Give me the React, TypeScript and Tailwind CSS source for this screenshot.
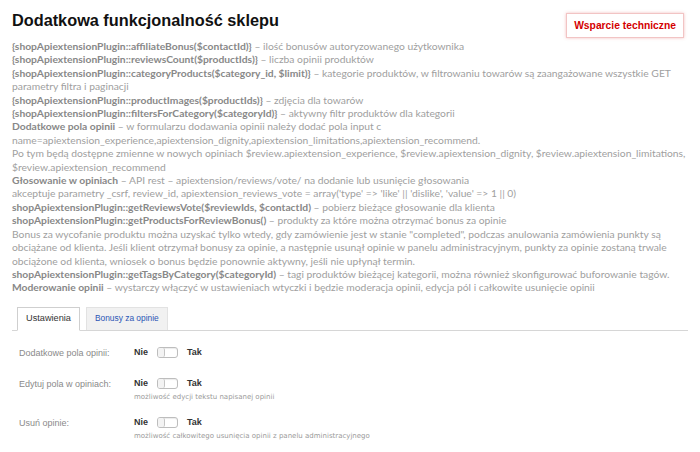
import React from 'react';

const B: React.FC<{ children: React.ReactNode }> = ({ children }) => (
  <span className="font-bold text-[#888]">{children}</span>
);

const Toggle: React.FC = () => (
  <span className="relative inline-block w-[21px] h-[11px] rounded-[3px] border border-[#bdbdbd] bg-white shadow-[inset_0_1px_1px_rgba(0,0,0,0.08)]">
    <span className="absolute left-0 top-0 h-[9px] w-[7px] rounded-[2px] border-r border-[#c4c4c4] bg-[#f3f3f3]" />
  </span>
);

const SettingRow: React.FC<{ label: string; hint?: string; className?: string }> = ({ label, hint, className }) => (
  <div className={`flex ${className ?? ''}`}>
    <div className="w-[115px] shrink-0 text-[9px] text-[#8a8a8a] leading-[12px]">{label}</div>
    <div>
      <div className="flex items-center gap-[9px] h-[12px]">
        <span className="text-[9px] font-bold text-[#333]">Nie</span>
        <Toggle />
        <span className="text-[9px] font-bold text-[#333]">Tak</span>
      </div>
      {hint && (
        <div className="mt-[3px] text-[7px] leading-[9px] text-[#9a9a9a] font-['DejaVu_Sans',sans-serif]">{hint}</div>
      )}
    </div>
  </div>
);

export default function App() {
  return (
    <div className="w-[700px] h-[452px] bg-white px-[12px] pt-[9px] font-['Liberation_Sans',Arial,sans-serif] overflow-hidden">
      <div className="flex items-start justify-between">
        <h1 className="text-[16.3px] font-bold text-[#111] leading-[22px]">Dodatkowa funkcjonalność sklepu</h1>
        <button className="mt-[4px] mr-[4px] h-[25px] px-[7px] bg-white border border-[#f2c4c4] shadow-[0_0_3px_rgba(220,80,80,0.35)] text-[10.3px] font-bold text-[#d40000]">
          Wsparcie techniczne
        </button>
      </div>

      <div className="mt-[2px] font-['Lato',sans-serif] text-[10.3px] leading-[13.4px] text-[#a0a0a0] whitespace-nowrap">
        <div><B>{'{shopApiextensionPlugin::affiliateBonus($contactId)}'}</B> – ilość bonusów autoryzowanego użytkownika</div>
        <div><B>{'{shopApiextensionPlugin::reviewsCount($productIds)}'}</B> – liczba opinii produktów</div>
        <div>
          <B>{'{shopApiextensionPlugin::categoryProducts($category_id, $limit)}'}</B> – kategorie produktów, w filtrowaniu towarów są zaangażowane wszystkie GET
          <br />
          parametry filtra i paginacji
        </div>
        <div><B>{'{shopApiextensionPlugin::productImages($productIds)}'}</B> – zdjęcia dla towarów</div>
        <div><B>{'{shopApiextensionPlugin::filtersForCategory($categoryId)}'}</B> – aktywny filtr produktów dla kategorii</div>
        <div>
          <B>Dodatkowe pola opinii</B> – w formularzu dodawania opinii należy dodać pola input c
          <br />
          name=apiextension_experience,apiextension_dignity,apiextension_limitations,apiextension_recommend.
        </div>
        <div>
          Po tym będą dostępne zmienne w nowych opiniach $review.apiextension_experience, $review.apiextension_dignity, $review.apiextension_limitations,
          <br />
          $review.apiextension_recommend
        </div>
        <div><B>Głosowanie w opiniach</B> – API rest – apiextension/reviews/vote/ na dodanie lub usunięcie głosowania</div>
        <div>akceptuje parametry _csrf, review_id, apiextension_reviews_vote = array('type' =&gt; 'like' || 'dislike', 'value' =&gt; 1 || 0)</div>
        <div><B>shopApiextensionPlugin::getReviewsVote($reviewIds, $contactId)</B> – pobierz bieżące głosowanie dla klienta</div>
        <div><B>shopApiextensionPlugin::getProductsForReviewBonus()</B> – produkty za które można otrzymać bonus za opinie</div>
        <div>
          Bonus za wycofanie produktu można uzyskać tylko wtedy, gdy zamówienie jest w stanie "completed", podczas anulowania zamówienia punkty są
          <br />
          obciążane od klienta. Jeśli klient otrzymał bonusy za opinie, a następnie usunął opinie w panelu administracyjnym, punkty za opinie zostaną trwale
          <br />
          obciążone od klienta, wniosek o bonus będzie ponownie aktywny, jeśli nie upłynął termin.
        </div>
        <div><B>shopApiextensionPlugin::getTagsByCategory($categoryId)</B> – tagi produktów bieżącej kategorii, można również skonfigurować buforowanie tagów.</div>
        <div><B>Moderowanie opinii</B> – wystarczy włączyć w ustawieniach wtyczki i będzie moderacja opinii, edycja pól i całkowite usunięcie opinii</div>
      </div>

      <div className="mt-[12px] flex items-end gap-[6px] border-b border-[#d6d6d6] pl-[5px]">
        <div className="-mb-px h-[24px] px-[8px] flex items-center border border-[#cfcfcf] border-b-white bg-white text-[9.2px] text-[#333]">
          Ustawienia
        </div>
        <div className="h-[23px] px-[8px] flex items-center border border-[#e2e2e2] border-b-0 bg-[#f1f1f1] text-[8.4px] text-[#2b55b5]">
          Bonusy za opinie
        </div>
      </div>

      <div className="mt-[16px] pl-[7px] flex flex-col">
        <SettingRow label="Dodatkowe pola opinii:" />
        <SettingRow className="mt-[19px]" label="Edytuj pola w opiniach:" hint="możliwość edycji tekstu napisanej opinii" />
        <SettingRow className="mt-[15px]" label="Usuń opinie:" hint="możliwość całkowitego usunięcia opinii z panelu administracyjnego" />
      </div>
    </div>
  );
}
